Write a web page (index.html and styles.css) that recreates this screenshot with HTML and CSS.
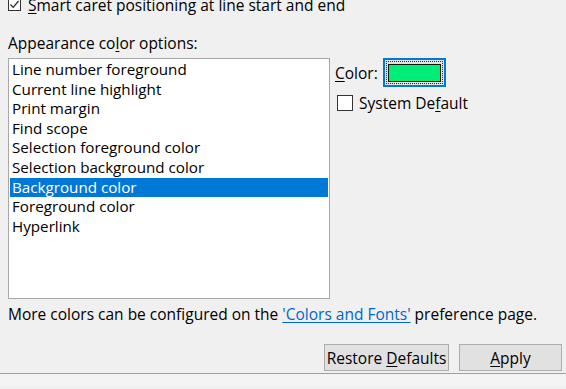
FILE: index.html
```html
<!DOCTYPE html>
<html lang="en">

<head>
    <meta charset="UTF-8">
    <meta name="viewport" content="width=device-width, initial-scale=1.0">
    <title>Appearance</title>
    <link rel="stylesheet" href="styles.css">
</head>

<body>
    <div class="page">
        <label class="check top-check">
            <span class="box">
                <svg width="11" height="11" viewBox="0 0 11 11"><path d="M1.5 5.5 L4.2 8.3 L9.5 2" fill="none" stroke="#222" stroke-width="1.2"/></svg>
            </span>
            <span><u>S</u>mart caret positioning at line start and end</span>
        </label>

        <div class="caption">Appearance co<u>l</u>or options:</div>

        <div class="main">
            <ul class="list">
                <li>Line number foreground</li>
                <li>Current line highlight</li>
                <li>Print margin</li>
                <li>Find scope</li>
                <li>Selection foreground color</li>
                <li>Selection background color</li>
                <li class="selected">Background color</li>
                <li>Foreground color</li>
                <li>Hyperlink</li>
            </ul>

            <div class="side">
                <div class="color-row">
                    <span><u>C</u>olor:</span>
                    <button class="swatch-btn"><span class="swatch"></span></button>
                </div>
                <label class="check">
                    <span class="box"></span>
                    <span>System De<u>f</u>ault</span>
                </label>
            </div>
        </div>

        <p class="note">More colors can be configured on the <a href="#">'Colors and Fonts'</a> preference page.</p>

        <div class="buttons">
            <button class="btn">Restore <u>D</u>efaults</button>
            <button class="btn apply"><u>A</u>pply</button>
        </div>
    </div>
    <div class="footer"></div>
</body>

</html>
```

FILE: styles.css
```css
body {
    margin: 0;
    background-color: #f0f0f0;
    font-family: 'Open Sans', 'Noto Sans', sans-serif;
    font-size: 15.5px;
    color: #000;
    overflow: hidden;
}

u {
    text-decoration-thickness: 1px;
    text-underline-offset: 2px;
}

.page {
    padding: 0 8px;
    height: 377px;
    box-sizing: border-box;
}

.check {
    display: flex;
    align-items: center;
    gap: 7px;
    height: 17px;
}

.box {
    width: 11px;
    height: 11px;
    border: 1px solid #333;
    background: #fff;
    display: flex;
    align-items: center;
    justify-content: center;
    flex-shrink: 0;
}

.top-check {
    margin-top: -4px;
}

.caption {
    margin-top: 20px;
    height: 20px;
    line-height: 20px;
}

.main {
    display: flex;
    margin-top: 5px;
}

.list {
    list-style: none;
    margin: 0;
    padding: 1px;
    width: 318px;
    height: 237px;
    background: #fff;
    border: 1px solid #a8a8a8;
    font-size: 15.2px;
}

.list li {
    height: 19.6px;
    line-height: 19.6px;
    padding-left: 2px;
    white-space: nowrap;
}

.list li.selected {
    background-color: #0078d7;
    color: #fff;
}

.side {
    margin-left: 5px;
    display: flex;
    flex-direction: column;
    gap: 7px;
}

.color-row {
    display: flex;
    align-items: center;
    gap: 5px;
    height: 29px;
}

.swatch-btn {
    width: 63px;
    height: 29px;
    padding: 0;
    border: 2px solid #0078d7;
    background: #e1e1e1;
    display: flex;
    align-items: center;
    justify-content: center;
    outline: 1px dotted #333;
    outline-offset: -4px;
}

.swatch {
    width: 51px;
    height: 16px;
    background: #00ee78;
    border: 1px solid #111;
}

.side .check {
    margin-left: 2px;
    gap: 6px;
}

.side .box {
    width: 14px;
    height: 14px;
}

.note {
    margin: 5px 0 0;
    height: 20px;
    line-height: 20px;
}

.note a {
    color: #0066cc;
    text-decoration-thickness: 1px;
    text-underline-offset: 2px;
}

.buttons {
    display: flex;
    justify-content: flex-end;
    gap: 10px;
    margin-top: 20px;
    margin-right: -4px;
}

.btn {
    font-family: inherit;
    font-size: 15.5px;
    height: 27px;
    padding: 0;
    border: 1px solid #adadad;
    background-color: #e1e1e1;
    color: #000;
}

.btn:first-child {
    width: 125px;
}

.btn.apply {
    width: 103px;
}

.footer {
    border-top: 1px solid #a0a0a0;
    background: #f4f4f4;
    height: 12px;
}
```
